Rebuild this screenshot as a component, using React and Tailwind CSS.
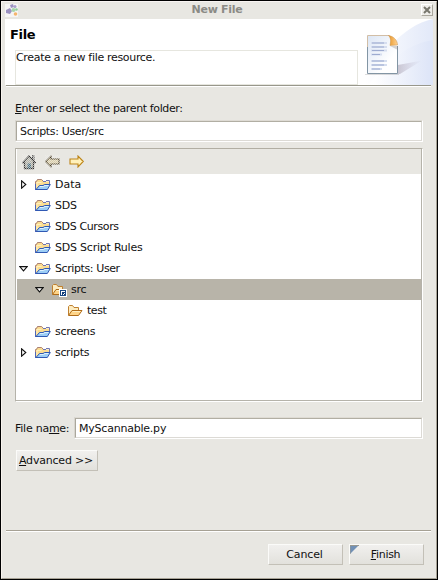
import React from 'react';

function OpenFolder() {
  return (
    <svg width="16" height="13" viewBox="0 0 16 13" className="shrink-0">
      <path d="M.5 11V3.500L1.500 2.500L2.500 1h4l1.500 1.500V3.500h6.500V6.500L12 11z" fill="#fbdc90" />
      <path d="M.5 7V3.500h1L2.500 1.500H6.500L8 3" fill="none" stroke="#a98078" />
      <path d="M1.500 4.500h5M2 5v4" stroke="#fff0bd" />
      <path d="M8 3.500h3M11 2.500h3.500V6" fill="none" stroke="#6f76b3" />
      <path d="M.5 6V12" stroke="#4d66b8" />
      <path d="M1 11.500L4.500 7.500H8L9.500 6.500H15.300L12.300 11.500z" fill="#9ccdf5" stroke="#3059b4" />
      <path d="M5 8.500h3.500L10 7.500h3.500" fill="none" stroke="#dcf1ff" />
    </svg>
  );
}

function GoldFolder({ linked }) {
  return (
    <svg width="16" height="13" viewBox="0 0 16 13" className="shrink-0 overflow-visible">
      <path d="M1.500 11V2.500L2.500 1.500h3L7 3.500h4.500V6" fill="#fdecc0" stroke="#bf8030" />
      <path d="M1.500 11.500L5 6.500h10L11.500 11.500z" fill="#fed488" stroke="#b06c18" />
      <path d="M5.500 7.500h8" stroke="#fff0c4" />
      {linked && (
        <g shapeRendering="crispEdges">
          <rect x="8" y="6" width="8" height="8" fill="#fff" />
          <path d="M9 7h6v6H9zM10 8v4h4V8z" fill="#174783" fillRule="evenodd" />
          <path d="M11 9h3v1h-2v2h-1zM12 10h1v1h1v1h-1v-1h-1z" fill="#123d78" />
        </g>
      )}
    </svg>
  );
}

function Expander({ open }) {
  return open ? (
    <svg width="9" height="6" viewBox="0 0 9 6" className="shrink-0">
      <path d="M.8.600h7.400L4.500 4.800z" fill="#fff" stroke="#111" strokeWidth="1.100" />
    </svg>
  ) : (
    <svg width="6" height="9" viewBox="0 0 6 9" className="shrink-0">
      <path d="M.6.800v7.400L4.800 4.500z" fill="#fff" stroke="#111" strokeWidth="1.100" />
    </svg>
  );
}

const rows = [
  { name: 'Data', pad: 'pl-[4px]', arrow: 'closed', spacing: 'tracking-normal' },
  { name: 'SDS', pad: 'pl-[4px]', spacing: 'tracking-[-0.2px]' },
  { name: 'SDS Cursors', pad: 'pl-[4px]', spacing: 'tracking-[-0.38px]' },
  { name: 'SDS Script Rules', pad: 'pl-[4px]', spacing: 'tracking-[-0.22px]' },
  { name: 'Scripts: User', pad: 'pl-[4px]', arrow: 'open', spacing: 'tracking-[-0.4px]' },
  { name: 'src', pad: 'pl-[20px]', arrow: 'open', icon: 'linked', spacing: 'tracking-[-0.2px]' },
  { name: 'test', pad: 'pl-[36px]', icon: 'gold', spacing: 'tracking-[-0.45px]' },
  { name: 'screens', pad: 'pl-[4px]', spacing: 'tracking-[-0.3px]' },
  { name: 'scripts', pad: 'pl-[4px]', arrow: 'closed', spacing: 'tracking-[-0.33px]' },
];

function TreeRow({ row }) {
  return (
    <div className={`ml-px flex h-[21px] items-center ${row.pad} ${row.icon === 'linked' ? 'bg-[#b8b4a9]' : ''}`}>
      <span className={`flex w-[14px] shrink-0 ${row.arrow === 'open' ? '-ml-[2px] mr-[2px]' : ''}`}>
        {row.arrow && <Expander open={row.arrow === 'open'} />}
      </span>
      {row.icon ? <GoldFolder linked={row.icon === 'linked'} /> : <OpenFolder />}
      <span className={`ml-[4px] leading-[14px] ${row.spacing}`}>{row.name}</span>
    </div>
  );
}

function Logo() {
  return (
    <svg width="13" height="13" viewBox="0 0 13 13" className="shrink-0">
      <rect width="13" height="13" fill="#f6f5f5" />
      <path d="M5 1l3-1 1 3-3 1zM1 6l4-2 2 3-2 3-4-1z" fill="#9b91c0" />
      <circle cx="10" cy="2.500" r="1.500" fill="#a99fcb" />
      <circle cx="8.500" cy="6" r="2" fill="#a7d6ad" />
      <circle cx="11.500" cy="5.500" r="1.300" fill="#8fcf9b" />
      <circle cx="10.500" cy="10" r="1.800" fill="#f5b56d" />
    </svg>
  );
}

function BannerArt() {
  return (
    <svg width="75" height="66" viewBox="0 0 75 66" className="shrink-0">
      <defs>
        <linearGradient id="sweep" x1="0" x2="1" y1=".5" y2=".5">
          <stop offset=".1" stopColor="#fff" /><stop offset="1" stopColor="#dbe3f7" />
        </linearGradient>
        <linearGradient id="sheet" x2="1" y2="1">
          <stop stopColor="#dce6f5" /><stop offset=".7" stopColor="#fff" />
        </linearGradient>
        <linearGradient id="shade" x2="1">
          <stop stopColor="#8d8194" stopOpacity=".4" /><stop offset="1" stopColor="#aaa0bb" stopOpacity="0" />
        </linearGradient>
        <linearGradient id="fold"><stop stopColor="#e89627" /><stop offset="1" stopColor="#ffd191" /></linearGradient>
      </defs>
      <path d="M0 66C20 40 44 6 75 0v66z" fill="url(#sweep)" opacity=".8" />
      <path d="M10 66C30 41 50 25 75 21v45z" fill="url(#sweep)" opacity=".8" />
      <path d="M40 55V46L64 41.500L42 55z" fill="url(#shade)" />
      <path d="M7 55.500h34" stroke="#777" opacity=".25" />
      <path d="M9.500 16.500h21l9 10v28h-30z" fill="url(#sheet)" />
      <path d="M9.500 30V16.500h22" fill="none" stroke="#d2bea6" />
      <path d="M9.500 28v26.500h30V27" fill="none" stroke="#8295a4" />
      <path d="M30.500 16.500c3 3 2 7 1.500 10l7.500-.5c0-4-3-8.500-9-9.500z" fill="url(#fold)" stroke="#c9914c" strokeWidth=".5" />
      <path d="M32 27h8v4z" fill="#8c8583" opacity=".35" />
      <path d="M13 24h16M13 28h16M13 31.500h16M13 35.500h11M13 42h16M13 46h16M13 50h11" stroke="#d6deef" strokeWidth="2" />
      <path d="M14 24h12M14 28h12M14 31.500h12M14 35.500h8M14 42h12M14 46h12M14 50h8" stroke="#9dabd0" />
    </svg>
  );
}

function ToolIcons() {
  return (
    <div className="ml-px flex h-[25px] items-center bg-[#e8e7e2] pl-[5px]">
      <svg width="14" height="16" viewBox="0 0 14 16">
        <defs>
          <pattern id="dots" width="2" height="2" patternUnits="userSpaceOnUse">
            <path d="M0 0h1v1H0zM1 1h1v1H1z" fill="#eeede9" shapeRendering="crispEdges" />
          </pattern>
        </defs>
        <path d="M2.500 14.500V8.500H.8L7 2l6.200 6.500h-1.700v6z" fill="#b0b0a7" stroke="#333" strokeWidth="1.300" />
        <path d="M10.500 5V1.500H12V6.500" fill="none" stroke="#444" />
        <path d="M5.500 9.500h3.500v5h-3.500z" fill="#4d7183" />
        <rect width="14" height="16" fill="url(#dots)" opacity=".65" />
      </svg>
      <svg width="15" height="13" viewBox="0 0 15 13" className="ml-[9px]">
        <path d="M.7 6.500L6 1.200V4h8v5H6v2.800z" fill="#dacda8" stroke="#4d422a" strokeWidth="1.200" />
        <rect width="15" height="13" fill="url(#dots)" opacity=".65" />
      </svg>
      <svg width="15" height="13" viewBox="0 0 15 13" className="ml-[9px]">
        <path d="M14.300 6.500L9 1v3H1v5h8v3z" fill="#fff1bb" stroke="#bd8518" strokeWidth="1.100" />
      </svg>
    </div>
  );
}

function Field({ children, className = '' }) {
  return (
    <div className={`h-[22px] border border-b-white border-l-[#d8d5ce] border-r-white border-t-[#dedbd4] ${className}`}>
      <div className="h-full border border-b-[#dcdad5] border-l-[#aaa79c] border-r-[#dcdad5] border-t-[#b1aea3] bg-white pl-[3px] leading-[19px]">
        {children}
      </div>
    </div>
  );
}

function Button({ children, className = '' }) {
  return (
    <button className={`relative flex h-[21px] items-center justify-center border border-b-[#c3c0b7] border-l-[#fbfbf9] border-r-[#c3c0b7] border-t-[#fbfbf9] bg-linear-to-b from-[#f1f0ee] to-[#e2e1dc] leading-[14px] ${className}`}>
      {children}
    </button>
  );
}

export default function App() {
  return (
    <div className="flex h-[580px] w-[438px] flex-col border border-black bg-[#e8e7e2] font-['DejaVu_Sans',sans-serif] text-[11px] text-[#111]">
      <div className="flex h-[578px] flex-col border border-b-[#a6a194] border-l-[#f8f4ee] border-r-[#a6a194] border-t-[#f8f4f2]">
        <header className="flex h-[17px] items-center pb-px pl-[3px] pr-[3px]">
          <Logo />
          <h1 className="grow pr-[5px] text-center text-[11px] font-bold leading-[14px] tracking-[-0.3px] text-[#8b8b86]">New File</h1>
          <button aria-label="Close" className="flex size-[12px] shrink-0 items-center justify-center border border-b-[#aaa79d] border-l-white border-r-[#aaa79d] border-t-white bg-[#eeede9]">
            <svg width="8" height="8" viewBox="0 0 8 8" className="shrink-0"><path d="M1 1l6 6M7 1L1 7" stroke="#77766c" strokeWidth="2" /></svg>
          </button>
        </header>

        <section className="ml-[3px] mr-[3px] flex h-[66px] bg-white">
          <div className="flex grow flex-col">
            <h2 className="h-[31px] pl-[5px] pt-[7px] text-[13px] font-bold leading-[17px] tracking-[-0.35px] text-black">File</h2>
            <p className="ml-[10px] h-[35px] w-[343px] border border-[#e6e6df] leading-[13px] tracking-[-0.32px]">Create a new file resource.</p>
          </div>
          <BannerArt />
        </section>
        <div className="ml-[4px] mr-[5px] h-[2px] shrink-0 border-b border-t border-b-white border-t-[#98978b]" />

        <main className="flex flex-col pl-[13px] pr-[13px]">
          <label className="mt-[15px] h-[18px] leading-[14px] tracking-[-0.38px]"><u>E</u>nter or select the parent folder:</label>
          <Field className="tracking-[-0.35px]">Scripts: User/src</Field>
          <div className="mt-[6px] h-[254px] border border-b-white border-l-[#b5b3aa] border-r-white border-t-[#b1aea3]">
            <div className="h-full border-b border-r border-[#b5b3aa] bg-white">
              <ToolIcons />
              {rows.map((row) => <TreeRow key={row.name} row={row} />)}
            </div>
          </div>
          <div className="mt-[15px] flex items-center">
            <label className="w-[59px] pt-[2px] leading-[14px] tracking-[-0.25px]">File na<u>m</u>e:</label>
            <Field className="grow tracking-[-0.22px]">MyScannable.py</Field>
          </div>
          <Button className="ml-px mt-[11px] w-[82px] pr-[2px] tracking-[-0.2px]"><span><u>A</u>dvanced &gt;&gt;</span></Button>
        </main>

        <footer className="mt-auto h-[48px] shrink-0">
          <div className="ml-[4px] mr-[5px] h-[2px] border-b border-t border-b-white border-t-[#a6a194]" />
          <div className="mt-[12px] flex justify-end gap-[6px] pr-[12px]">
            <Button className="w-[75px] pr-[2px] tracking-[-0.15px]">Cancel</Button>
            <Button className="w-[75px] pr-[2px] tracking-[-0.3px]">
              <svg width="9" height="9" viewBox="0 0 9 9" className="absolute left-0 top-0"><path d="M0 0h9L0 9z" fill="#7190b5" /><path d="M0 9V.500h9" fill="none" stroke="#99988f" /></svg>
              <span><u>F</u>inish</span>
            </Button>
          </div>
        </footer>
      </div>
    </div>
  );
}
